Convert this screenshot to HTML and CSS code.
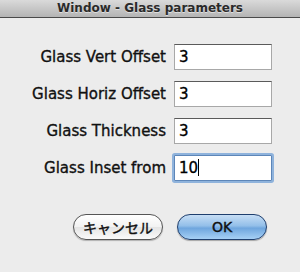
FILE: index.html
```html
<!DOCTYPE html>
<html lang="en">
<head>
    <meta charset="UTF-8">
    <title>Window - Glass parameters</title>
    <link rel="stylesheet" href="styles.css">
</head>
<body>

<div class="window">
    <div class="title-bar">Window - Glass parameters</div>

    <div class="params">
        <label for="vertOffset">Glass Vert Offset</label>
        <div class="field" id="vertOffset">3</div>

        <label for="horizOffset">Glass Horiz Offset</label>
        <div class="field" id="horizOffset">3</div>

        <label for="thickness">Glass Thickness</label>
        <div class="field" id="thickness">3</div>

        <label for="insetFrom">Glass Inset from</label>
        <div class="field focused" id="insetFrom">10<span class="caret"></span></div>
    </div>

    <div class="buttons">
        <button class="btn cancel">キャンセル</button>
        <button class="btn ok">OK</button>
    </div>
</div>

</body>
</html>
```

FILE: styles.css
```css
body {
    margin: 0;
    background-color: #ececec;
    font-family: 'DejaVu Sans', 'Noto Sans CJK JP', sans-serif;
}

.window {
    width: 300px;
    height: 272px;
    background-color: #ececec;
}

.title-bar {
    height: 17px;
    line-height: 17px;
    text-align: center;
    font-size: 12px;
    font-weight: bold;
    color: #2a2a2a;
    text-shadow: 0 1px 0 rgba(255, 255, 255, 0.5);
    background: linear-gradient(#dadada, #b4b4b4);
    border-bottom: 1px solid #4a4a4a;
}

.params {
    display: grid;
    grid-template-columns: 166px 98px;
    column-gap: 8px;
    row-gap: 11px;
    margin-top: 26px;
    align-items: center;
}

.params label {
    text-align: right;
    font-size: 15px;
    color: #111;
    -webkit-text-stroke: 0.35px #111;
}

.field {
    height: 24px;
    line-height: 25px;
    padding-left: 4px;
    font-size: 15px;
    color: #000;
    background-color: #fff;
    border: 1px solid #a8a8a8;
    border-top-color: #5a5a5a;
    -webkit-text-stroke: 0.35px #000;
}

.field.focused {
    border-color: #5d86b8;
    box-shadow: 0 0 0 2px #8fb3dc;
    border-radius: 1px;
}

.caret {
    display: inline-block;
    width: 1px;
    height: 17px;
    vertical-align: -3px;
    background-color: #000;
}

.buttons {
    display: flex;
    gap: 14px;
    margin-top: 33px;
    padding-left: 73px;
}

.btn {
    width: 90px;
    height: 26px;
    border-radius: 13px;
    font-family: 'DejaVu Sans', 'Noto Sans CJK JP', sans-serif;
    font-size: 14px;
    color: #111;
    padding: 0;
    -webkit-text-stroke: 0.4px #111;
}

.btn.cancel {
    border: 1px solid #555;
    background: linear-gradient(#ffffff, #f2f2f2 50%, #e4e4e4 51%, #fafafa);
    box-shadow: 0 1px 1px rgba(0, 0, 0, 0.25);
}

.btn.ok {
    border: 1px solid #1f3f6e;
    background: linear-gradient(#c7def5, #93bfe9 45%, #6fa6de 55%, #a6d0f5);
    box-shadow: 0 1px 1px rgba(0, 0, 0, 0.3);
}
```
